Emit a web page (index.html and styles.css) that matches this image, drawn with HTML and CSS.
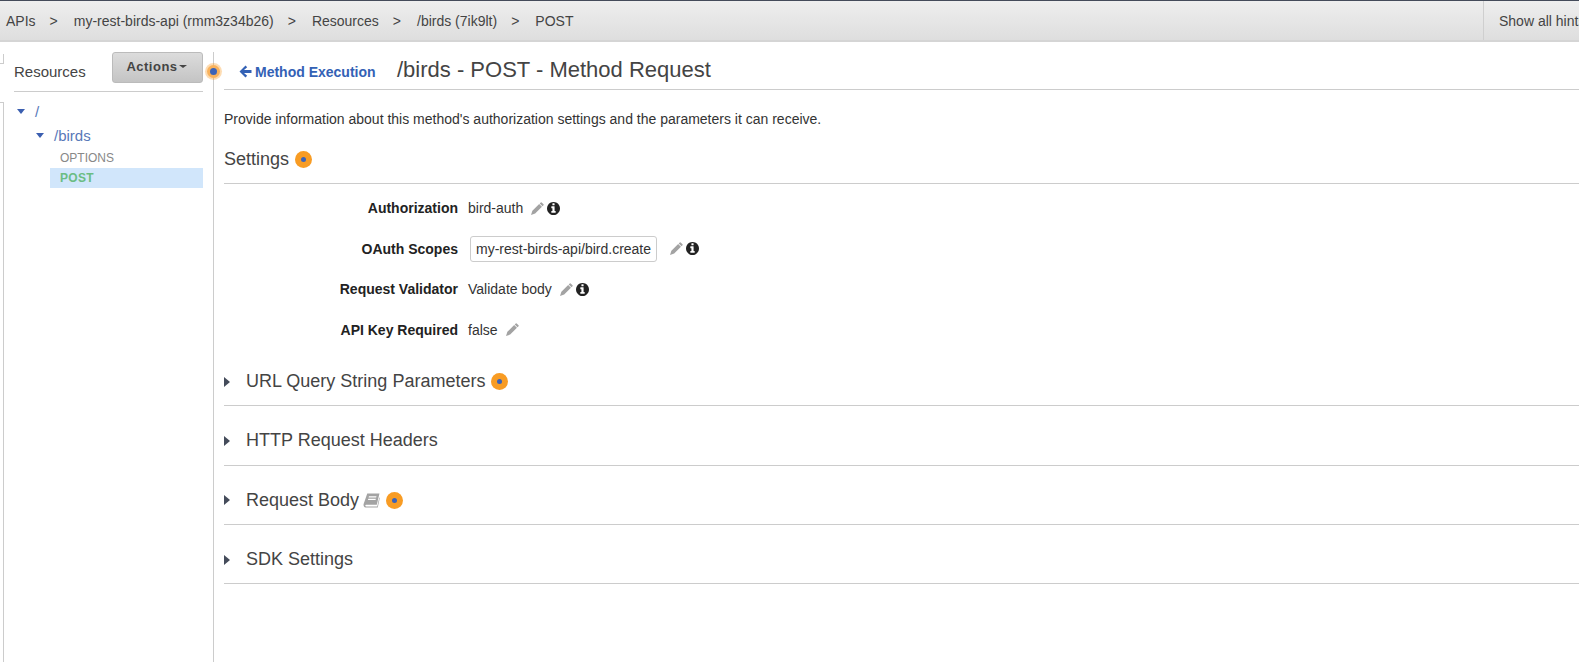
FILE: index.html
```html
<html>
  <head>
    <meta charset="UTF-8" />
    <title>POST - Method Request</title>
    <link rel="stylesheet" href="styles.css">
  </head>
  <body>
    <svg class="defs" width="0" height="0">
      <symbol id="pencil" viewBox="0 0 14 14">
        <path d="M10.5 .5 Q11 0 11.5 .5 L13.5 2.5 Q14 3 13.5 3.5 L12.4 4.6 L9.4 1.6 Z M8.8 2.2 L11.8 5.2 L4.5 12.5 L0 14 L1.5 9.5 Z"/>
      </symbol>
      <symbol id="info" viewBox="0 0 1536 1536">
        <path d="M1024 1248v-160q0-14-9-23t-23-9h-96v-512q0-14-9-23t-23-9h-320q-14 0-23 9t-9 23v160q0 14 9 23t23 9h96v320h-96q-14 0-23 9t-9 23v160q0 14 9 23t23 9h448q14 0 23-9t9-23zm-128-896v-160q0-14-9-23t-23-9h-192q-14 0-23 9t-9 23v160q0 14 9 23t23 9h192q14 0 23-9t9-23zm640 416q0 209-103 385.5t-279.5 279.5-385.5 103-385.5-103-279.5-279.5-103-385.5 103-385.5 279.5-279.5 385.5-103 385.5 103 279.5 279.5 103 385.5z"/>
      </symbol>
      <symbol id="book" viewBox="0 0 16 14">
        <path d="M4 .5 H15.5 L13 11 H3 Q2 11 2.2 12 Q2.4 12.6 3 12.6 H13.4 L15.4 4 L15.8 4.6 L13.9 13.5 H2.5 Q.3 13.3 .5 10.5 Z M5.6 3 L5.3 4.2 H12.4 L12.7 3 Z M5 5.4 L4.7 6.6 H11.8 L12.1 5.4 Z"/>
      </symbol>
    </svg>

    <div class="topbar">
      <div class="crumbs">
        <span>APIs</span><span class="sep">&gt;</span>
        <span>my-rest-birds-api (rmm3z34b26)</span><span class="sep">&gt;</span>
        <span>Resources</span><span class="sep">&gt;</span>
        <span>/birds (7ik9lt)</span><span class="sep">&gt;</span>
        <span>POST</span>
      </div>
      <div class="hints">Show all hints</div>
    </div>

    <div class="main">
      <div class="rail">
        <div class="railTop"></div>
        <div class="railBottom"></div>
      </div>

      <div class="sidebar">
        <div class="sideHead">
          <span class="sideTitle">Resources</span>
          <button class="actions">Actions<i class="caret"></i></button>
        </div>
        <div class="tree">
          <div class="treeRow treeRoot"><i class="arrowDown"></i><a>/</a></div>
          <div class="treeRow treeChild"><i class="arrowDown"></i><a>/birds</a></div>
          <div class="method">OPTIONS</div>
          <div class="method methodActive">POST</div>
        </div>
      </div>

      <div class="hint hintGlow"><i></i></div>

      <div class="content">
        <div class="pageHead">
          <a class="backLink"><svg class="arrowLeft" viewBox="0 0 13 13"><path d="M6.5 .5 L8.2 2.2 L5 5 H12.5 V8 H5 L8.2 10.8 L6.5 12.5 L.5 6.5 Z"/></svg>Method Execution</a>
          <h1>/birds - POST - Method Request</h1>
        </div>
        <p class="intro">Provide information about this method's authorization settings and the parameters it can receive.</p>

        <div class="settingsHead">
          <h2>Settings</h2>
          <div class="hint"><i></i></div>
        </div>

        <div class="settings">
          <div class="row">
            <label>Authorization</label>
            <span class="value">bird-auth</span>
            <svg class="icon pencil"><use href="#pencil"/></svg>
            <svg class="icon info"><use href="#info"/></svg>
          </div>
          <div class="row">
            <label>OAuth Scopes</label>
            <span class="scope">my-rest-birds-api/bird.create</span>
            <svg class="icon pencil pencilWide"><use href="#pencil"/></svg>
            <svg class="icon info"><use href="#info"/></svg>
          </div>
          <div class="row">
            <label>Request Validator</label>
            <span class="value">Validate body</span>
            <svg class="icon pencil"><use href="#pencil"/></svg>
            <svg class="icon info"><use href="#info"/></svg>
          </div>
          <div class="row">
            <label>API Key Required</label>
            <span class="value">false</span>
            <svg class="icon pencil"><use href="#pencil"/></svg>
          </div>
        </div>

        <div class="section">
          <i class="arrowRight"></i><h2>URL Query String Parameters</h2>
          <div class="hint"><i></i></div>
        </div>
        <div class="section">
          <i class="arrowRight"></i><h2>HTTP Request Headers</h2>
        </div>
        <div class="section">
          <i class="arrowRight"></i><h2>Request Body</h2>
          <svg class="book"><use href="#book"/></svg>
          <div class="hint"><i></i></div>
        </div>
        <div class="section">
          <i class="arrowRight"></i><h2>SDK Settings</h2>
        </div>
      </div>
    </div>
  </body>
</html>
```

FILE: styles.css
```css
html, body {
  height: 100%;
  overflow: hidden;
}
body {
  margin: 0;
  font-family: 'Liberation Sans', Arial, sans-serif;
  font-size: 14px;
  color: #333;
  background-color: #fff;
}
.defs {
  position: absolute;
}

.topbar {
  display: flex;
  justify-content: space-between;
  height: 39px;
  border-top: 1px solid #444b5a;
  border-bottom: 2px solid #d5d5d5;
  background: linear-gradient(#eeeeee, #dedede);
  white-space: nowrap;
}
.crumbs {
  display: flex;
  align-items: center;
  padding-left: 6px;
  color: #444;
}
.sep {
  margin: 0 16px 0 14px;
}
.hints {
  flex: none;
  width: 80px;
  overflow: hidden;
  padding: 0 0 0 15px;
  line-height: 41px;
  border-left: 1px solid #cfcfcf;
  color: #444;
}

.main {
  position: relative;
  display: flex;
  height: 620px;
}
.rail {
  flex: none;
  width: 4px;
}
.railTop {
  height: 9px;
  margin-top: 12px;
  border-right: 1px solid #ccc;
  border-bottom: 1px solid #ccc;
}
.railBottom {
  height: 559px;
  margin-top: 38px;
  border-right: 1px solid #ccc;
  border-top: 1px solid #ccc;
}

.sidebar {
  flex: none;
  width: 189px;
  margin: 10px 0 0;
  padding: 0 10px;
  border-right: 1px solid #ccc;
}
.sideHead {
  display: flex;
  justify-content: space-between;
  align-items: flex-start;
  height: 39px;
  border-bottom: 1px solid #ccc;
}
.sideTitle {
  margin-top: 11px;
  font-size: 15px;
  color: #444;
}
.actions {
  display: flex;
  align-items: center;
  justify-content: center;
  width: 91px;
  height: 31px;
  padding: 0 2px 2px 0;
  border: 1px solid #bbb;
  border-radius: 3px;
  background: linear-gradient(#dcdcdc, #c4c4c4);
  font-family: inherit;
  font-size: 13px;
  font-weight: bold;
  letter-spacing: .5px;
  color: #444;
}
.caret {
  margin-left: 1px;
  border-top: 3px solid #444;
  border-left: 4px solid transparent;
  border-right: 4px solid transparent;
}
.tree {
  padding-top: 7px;
}
.treeRow {
  display: flex;
  align-items: center;
  height: 24px;
  font-size: 15px;
}
.treeRow a {
  color: #5878b8;
}
.treeRoot {
  padding-left: 3px;
}
.treeChild {
  height: 25px;
  padding-left: 22px;
}
.arrowDown {
  margin-right: 10px;
  border-top: 5px solid #3b5fb0;
  border-left: 4px solid transparent;
  border-right: 4px solid transparent;
}
.method {
  margin-left: 36px;
  padding-left: 10px;
  font-size: 12px;
  line-height: 20px;
  color: #888;
}
.methodActive {
  background-color: #d1e6fb;
  font-weight: bold;
  letter-spacing: .3px;
  color: #6bbd84;
}

.hint {
  flex: none;
  position: relative;
  width: 17px;
  height: 17px;
  border-radius: 50%;
  background-color: #f89c24;
}
.hint i {
  position: absolute;
  left: 6px;
  top: 6px;
  width: 5px;
  height: 5px;
  border-radius: 50%;
  background-color: #3b63b8;
}
.hintGlow {
  position: absolute;
  left: 207px;
  top: 23px;
  width: 13px;
  height: 13px;
  background-color: #f9b25c;
  box-shadow: 0 0 0 2px rgba(248, 156, 36, .35);
}
.hintGlow i {
  left: 3px;
  top: 3px;
  width: 7px;
  height: 7px;
}

.content {
  flex: 1;
  min-width: 0;
  padding-left: 10px;
}
.pageHead {
  display: flex;
  align-items: center;
  height: 47px;
  border-bottom: 1px solid #ccc;
}
.backLink {
  display: flex;
  align-items: center;
  width: 159px;
  padding-left: 15px;
  padding-top: 12px;
  box-sizing: border-box;
  font-weight: bold;
  color: #3361b5;
}
.arrowLeft {
  width: 13px;
  height: 13px;
  margin-right: 3px;
  fill: #3361b5;
}
h1 {
  margin: 0 0 0 14px;
  padding-top: 8px;
  font-size: 22px;
  font-weight: normal;
  color: #444;
}
h2 {
  margin: 0;
  font-size: 18px;
  font-weight: normal;
  color: #444;
}
.intro {
  margin: 0;
  padding-top: 21px;
  line-height: 16px;
}
.settingsHead {
  display: flex;
  align-items: center;
  gap: 6px;
  height: 57px;
  padding-top: 9px;
  box-sizing: border-box;
  border-bottom: 1px solid #ccc;
}

.settings {
  padding-top: 3.9px;
  margin-bottom: -2.9px;
}
.row {
  display: flex;
  align-items: center;
  height: 40.5px;
}
.row label {
  width: 234px;
  margin-right: 10px;
  text-align: right;
  font-weight: bold;
  color: #222;
}
.value {
  color: #333;
}
.scope {
  margin-left: 2px;
  padding: 0 5px;
  line-height: 24px;
  border: 1px solid #ccc;
  border-radius: 3px;
  color: #333;
}
.icon {
  flex: none;
}
.pencil {
  width: 13px;
  height: 13px;
  margin-left: 8px;
  fill: #a3a3a3;
}
.pencilWide {
  margin-left: 13px;
}
.info {
  width: 13px;
  height: 13px;
  margin-left: 3px;
  fill: #222;
}

.section {
  display: flex;
  align-items: center;
  height: 59.3px;
  padding-top: 11px;
  box-sizing: border-box;
  border-bottom: 1px solid #ccc;
}
.section h2 {
  margin-right: 6px;
}
.arrowRight {
  margin-right: 16px;
  border-left: 6px solid #444b5a;
  border-top: 5px solid transparent;
  border-bottom: 5px solid transparent;
}
.book {
  width: 17px;
  height: 15px;
  margin-left: -2px;
  margin-right: 6px;
  fill: #a3a3a3;
}
```
